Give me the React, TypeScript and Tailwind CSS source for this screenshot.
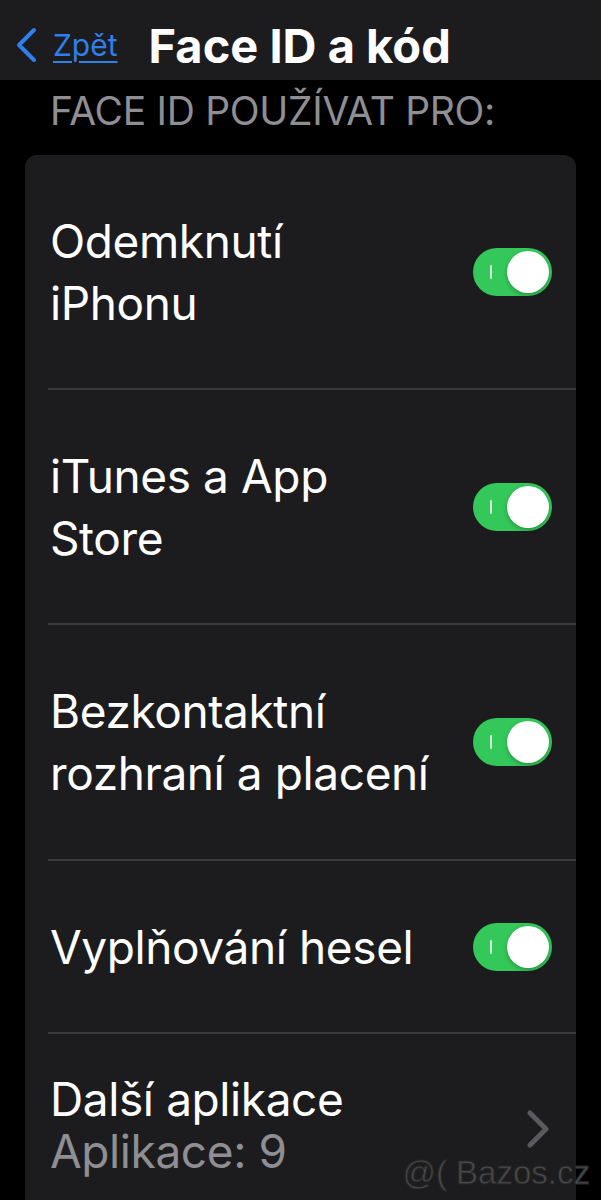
import React from "react";

type Row = {
  lines: string[];
  height: string;
};

const rows: Row[] = [
  { lines: ["Odemknutí", "iPhonu"], height: "h-[233px]" },
  { lines: ["iTunes a App", "Store"], height: "h-[233px]" },
  { lines: ["Bezkontaktní", "rozhraní a placení"], height: "h-[234px]" },
  { lines: ["Vyplňování hesel"], height: "h-[171px]" },
];

function Toggle() {
  return (
    <div className="relative h-[48px] w-[79px] shrink-0 rounded-full bg-[#34c759]">
      <div className="absolute left-[17px] top-[17px] h-[14px] w-[2px] rounded-full bg-white/80" />
      <div className="absolute right-[3px] top-[3px] h-[42px] w-[42px] rounded-full bg-white shadow-[0_2px_4px_rgba(0,0,0,0.25)]" />
    </div>
  );
}

function Separator() {
  return <div className="ml-[23px] h-[2px] bg-[#3a3a3d]" />;
}

export default function App() {
  return (
    <div className="relative h-[1200px] overflow-hidden bg-black font-['Inter',sans-serif] text-white">
      {/* nav bar */}
      <div className="flex h-[80px] items-center bg-[#1c1c1e] pt-[10px]">
        <svg
          className="ml-[15px] h-[36px] w-[22px]"
          viewBox="0 0 22 36"
          fill="none"
          stroke="#2f80ed"
          strokeWidth="4"
          strokeLinecap="round"
          strokeLinejoin="round"
        >
          <polyline points="19,3 4,18 19,33" />
        </svg>
        <span className="ml-[16px] text-[30px] leading-none text-[#2f80ed] underline decoration-2 underline-offset-[5px]">
          Zpět
        </span>
        <span className="ml-[31px] text-[47px] font-bold leading-none">
          Face ID a kód
        </span>
      </div>

      {/* section label */}
      <div className="flex h-[75px] items-start pl-[50px] pt-[11px] text-[39px] leading-[40px] tracking-[-0.3px] text-[#8e8e93]">
        FACE ID POUŽÍVAT PRO:
      </div>

      {/* card */}
      <div className="mx-[25px] rounded-[12px] bg-[#1c1c1e]">
        {rows.map((row) => (
          <div key={row.lines[0]}>
            <div className={`flex ${row.height} items-center justify-between pl-[25px] pr-[24px]`}>
              <div className="text-[46px] leading-[62px] tracking-[-0.4px]">
                {row.lines.map((l) => (
                  <div key={l}>{l}</div>
                ))}
              </div>
              <Toggle />
            </div>
            <Separator />
          </div>
        ))}
        <div className="flex h-[190px] items-center justify-between pl-[25px] pr-[27px]">
          <div className="-mt-[8px] text-[46px] leading-[52px] tracking-[-0.4px]">
            <div>Další aplikace</div>
            <div className="text-[#8e8e93]">Aplikace: 9</div>
          </div>
          <svg
            className="h-[38px] w-[22px]"
            viewBox="0 0 22 38"
            fill="none"
            stroke="#5a5a5e"
            strokeWidth="5"
            strokeLinecap="round"
            strokeLinejoin="round"
          >
            <polyline points="3,3 19,19 3,35" />
          </svg>
        </div>
      </div>

      {/* watermark */}
      <div className="absolute bottom-[11px] right-[11px] font-['Liberation_Sans',sans-serif] text-[33px] leading-none text-[#4a4a4c] [-webkit-text-stroke:1px_#262626]">
        @( Bazos.cz
      </div>
    </div>
  );
}
